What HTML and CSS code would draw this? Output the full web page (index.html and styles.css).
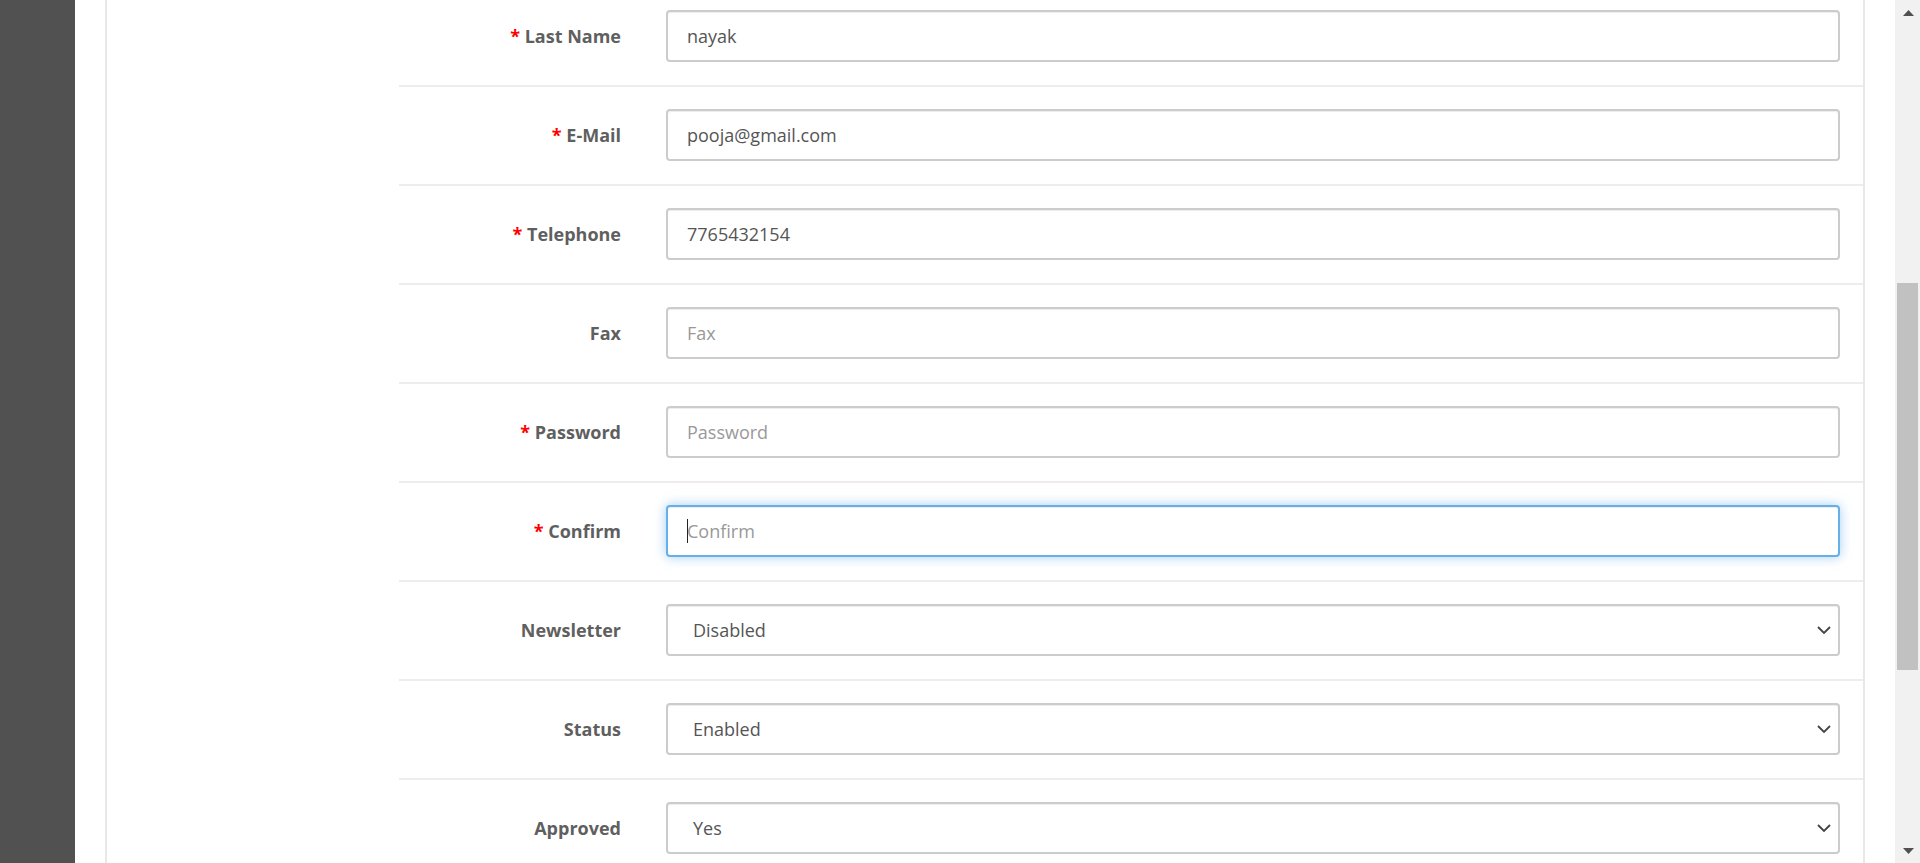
FILE: index.html
```html
<!DOCTYPE html>
<html lang="en">
<head>
<meta charset="utf-8">
<title>Customer Form</title>
<link rel="stylesheet" href="styles.css">
</head>
<body>
<div class="app">
  <aside class="sidebar"></aside>
  <main class="content">
    <div class="panel">
      <nav class="tabs-col"></nav>
      <form class="form">
        <div class="form-group required">
          <label class="control-label" for="f-lastname">Last Name</label>
          <div class="control"><input class="form-control" id="f-lastname" type="text" value="nayak" placeholder="Last Name"></div>
        </div>
        <div class="form-group required">
          <label class="control-label" for="f-email">E-Mail</label>
          <div class="control"><input class="form-control" id="f-email" type="text" value="pooja@gmail.com" placeholder="E-Mail"></div>
        </div>
        <div class="form-group required">
          <label class="control-label" for="f-tel">Telephone</label>
          <div class="control"><input class="form-control" id="f-tel" type="text" value="7765432154" placeholder="Telephone"></div>
        </div>
        <div class="form-group">
          <label class="control-label" for="f-fax">Fax</label>
          <div class="control"><input class="form-control" id="f-fax" type="text" value="" placeholder="Fax"></div>
        </div>
        <div class="form-group required">
          <label class="control-label" for="f-pass">Password</label>
          <div class="control"><input class="form-control" id="f-pass" type="password" value="" placeholder="Password"></div>
        </div>
        <div class="form-group required">
          <label class="control-label" for="f-confirm">Confirm</label>
          <div class="control control-focus"><input class="form-control is-focus" id="f-confirm" type="password" value="" placeholder="Confirm"><span class="caret-line"></span></div>
        </div>
        <div class="form-group">
          <label class="control-label" for="f-newsletter">Newsletter</label>
          <div class="control"><select class="form-control form-select" id="f-newsletter"><option>Enabled</option><option selected>Disabled</option></select></div>
        </div>
        <div class="form-group">
          <label class="control-label" for="f-status">Status</label>
          <div class="control"><select class="form-control form-select" id="f-status"><option selected>Enabled</option><option>Disabled</option></select></div>
        </div>
        <div class="form-group">
          <label class="control-label" for="f-approved">Approved</label>
          <div class="control"><select class="form-control form-select" id="f-approved"><option selected>Yes</option><option>No</option></select></div>
        </div>
      </form>
    </div>
  </main>
  <div class="scrollbar" aria-hidden="true">
    <div class="sb-btn">
      <svg width="11" height="6" viewBox="0 0 11 6"><polygon points="5.5,0 11,6 0,6" fill="#505050"/></svg>
    </div>
    <div class="sb-track"><div class="sb-thumb"></div></div>
    <div class="sb-btn">
      <svg width="11" height="6" viewBox="0 0 11 6"><polygon points="0,0 11,0 5.5,6" fill="#505050"/></svg>
    </div>
  </div>
</div>
</body>
</html>
```
FILE: styles.css
```css
* { box-sizing: border-box; }

html, body {
  margin: 0;
  padding: 0;
  height: 863px;
  overflow: hidden;
  background: #fff;
  font-family: "Open Sans", "Liberation Sans", sans-serif;
  font-size: 18px;
  color: #666;
}

.app {
  display: flex;
  height: 863px;
}

.sidebar {
  width: 75px;
  flex: 0 0 75px;
  background: #515151;
}

.content {
  flex: 1;
  padding: 0 30px;
  overflow: hidden;
}

.panel {
  display: grid;
  grid-template-columns: 292px 1fr;
  border-left: 2px solid #e8e8e8;
  border-right: 2px solid #e8e8e8;
  min-height: 100%;
}

.form {
  margin-top: -14px;
}

.form-group {
  display: grid;
  grid-template-columns: 244px 1fr;
  align-items: center;
  border-top: 2px solid #ededed;
  padding: 22px 0 23px;
}

.control-label {
  text-align: right;
  padding-right: 22px;
  font-weight: 700;
  color: #5f5f5f;
  line-height: 26px;
}

.required .control-label::before {
  content: "* ";
  color: #f00;
  font-weight: 700;
}

.control {
  padding: 0 23px;
  position: relative;
}

.form-control {
  display: block;
  width: 100%;
  height: 52px;
  padding: 0 19px;
  border: 2px solid #cccccc;
  border-radius: 4px;
  background: #fff;
  font-family: "Open Sans", "Liberation Sans", sans-serif;
  font-size: 18px;
  color: #555;
  box-shadow: inset 0 1px 1px rgba(0, 0, 0, 0.075);
  outline: none;
}

.form-control::placeholder {
  color: #999;
  opacity: 1;
}

.form-control.is-focus {
  border-color: #66afe9;
  box-shadow: inset 0 1px 1px rgba(0, 0, 0, 0.075), 0 0 12px rgba(102, 175, 233, 0.6);
}

.caret-line {
  position: absolute;
  left: 44px;
  top: 14px;
  width: 1px;
  height: 24px;
  background: #222;
}

.form-select {
  appearance: none;
  -webkit-appearance: none;
  padding-left: 25px;
  background-image: url("data:image/svg+xml,%3Csvg xmlns='http://www.w3.org/2000/svg' width='14' height='8' viewBox='0 0 14 8'%3E%3Cpath d='M1 1l6 6 6-6' fill='none' stroke='%23444' stroke-width='1.8'/%3E%3C/svg%3E");
  background-repeat: no-repeat;
  background-position: right 7px center;
  background-size: 14px 8px;
}

.scrollbar {
  width: 25px;
  flex: 0 0 25px;
  background: #f1f1f1;
  display: flex;
  flex-direction: column;
}

.sb-btn {
  height: 25px;
  display: flex;
  align-items: center;
  justify-content: center;
  padding-left: 1px;
}

.sb-track {
  flex: 1;
  padding-top: 258px;
}

.sb-thumb {
  height: 387px;
  margin: 0 2px;
  background: #c1c1c1;
}
```
